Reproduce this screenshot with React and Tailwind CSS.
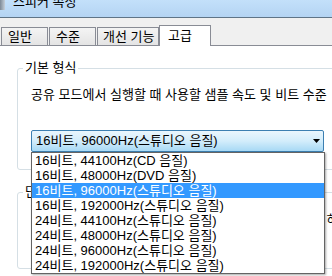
import React from "react";

const items = [
  "16비트, 44100Hz(CD 음질)",
  "16비트, 48000Hz(DVD 음질)",
  "16비트, 96000Hz(스튜디오 음질)",
  "16비트, 192000Hz(스튜디오 음질)",
  "24비트, 44100Hz(스튜디오 음질)",
  "24비트, 48000Hz(스튜디오 음질)",
  "24비트, 96000Hz(스튜디오 음질)",
  "24비트, 192000Hz(스튜디오 음질)",
];

export default function App() {
  return (
    <div className="relative w-[332px] h-[276px] overflow-hidden bg-[#f0f0f0] text-[13px] leading-[14px] text-black font-['Liberation_Sans','Noto_Sans_CJK_KR',sans-serif]">
      {/* title bar */}
      <div className="h-[18px] flex items-start bg-gradient-to-b from-[#c3e0fa] to-[#b4d4f3] border-b border-[#5f7487] overflow-hidden">
        <div className="w-[5px] h-[10px] bg-gradient-to-r from-[#7d8a97] to-[#c5d0da]" />
        <span className="ml-[8px] -mt-[4px] leading-[12px] whitespace-nowrap">스피커 속성</span>
      </div>

      {/* tabs */}
      <div className="h-[27px] flex items-end">
        <div className="ml-[1px] w-[47px] h-[18px] border border-b-0 border-[#898c95] bg-gradient-to-b from-[#f4f4f4] to-[#e4e4e4] flex items-center pl-[6px]">일반</div>
        <div className="ml-[1px] w-[47px] h-[18px] border border-b-0 border-[#898c95] bg-gradient-to-b from-[#f4f4f4] to-[#e4e4e4] flex items-center pl-[6px]">수준</div>
        <div className="ml-[1px] w-[62px] h-[18px] border border-b-0 border-[#898c95] bg-gradient-to-b from-[#f4f4f4] to-[#e4e4e4] flex items-center pl-[5px] whitespace-nowrap">개선 기능</div>
        <div className="relative z-10 -mb-px w-[52px] h-[21px] border border-b-0 border-[#898c95] bg-white flex items-center pl-[8px]">고급</div>
      </div>

      {/* panel */}
      <div className="h-[231px] bg-white border-t border-[#898c95]">
        <div className="relative ml-[17px] mt-[22px] w-[340px] h-[102px] border border-[#d5dfe5] rounded-[3px]">
          <span className="absolute left-[5px] -top-[8px] bg-white px-[2px] whitespace-nowrap">기본 형식</span>
          <div className="pt-[19px] pl-[13px] whitespace-nowrap">공유 모드에서 실행할 때 사용할 샘플 속도 및 비트 수준</div>
          <div className="mt-[28px] ml-[13px] w-[293px] h-[22px] border border-[#3c7fb1] rounded-[2px] bg-gradient-to-b from-[#eaf6fd] via-[#d3edfb] to-[#a7d9f5] flex items-center justify-between pl-[4px] pr-[3px]">
            <span className="whitespace-nowrap">16비트, 96000Hz(스튜디오 음질)</span>
            <svg width="7" height="4" viewBox="0 0 7 4"><polygon points="0,0 7,0 3.5,4" fill="#000" /></svg>
          </div>
        </div>

        <div className="relative ml-[17px] mt-[22px] w-[340px] h-[77px] border border-[#d5dfe5] rounded-[3px]">
          <span className="absolute left-[5px] -top-[8px] bg-white px-[2px] whitespace-nowrap">단독 모드</span>
          <div className="pt-[20px] pl-[13px] flex items-center gap-[6px] whitespace-nowrap">
            <span className="w-[13px] h-[13px] border border-[#8f8f8f]" />
            <span>응용 프로그램이 이 장치를 단독 모드로 사용하도록 허용</span>
          </div>
          <div className="pt-[8px] pl-[13px] flex items-center gap-[6px] whitespace-nowrap">
            <span className="w-[13px] h-[13px] border border-[#8f8f8f]" />
            <span>단독 모드 응용 프로그램에 우선 순위 제공</span>
          </div>
        </div>
      </div>

      {/* dropdown list */}
      <div className="absolute left-[31px] top-[152px] w-[294px] bg-white border border-[#646464] shadow-[1px_1px_2px_rgba(0,0,0,0.35)] z-20">
        {items.map((t, i) => (
          <div
            key={i}
            className={
              i === 2
                ? "h-[15px] leading-[15px] pl-[3px] whitespace-nowrap bg-[#3399ff] text-white"
                : "h-[15px] leading-[15px] pl-[3px] whitespace-nowrap"
            }
          >
            {t}
          </div>
        ))}
      </div>
    </div>
  );
}
